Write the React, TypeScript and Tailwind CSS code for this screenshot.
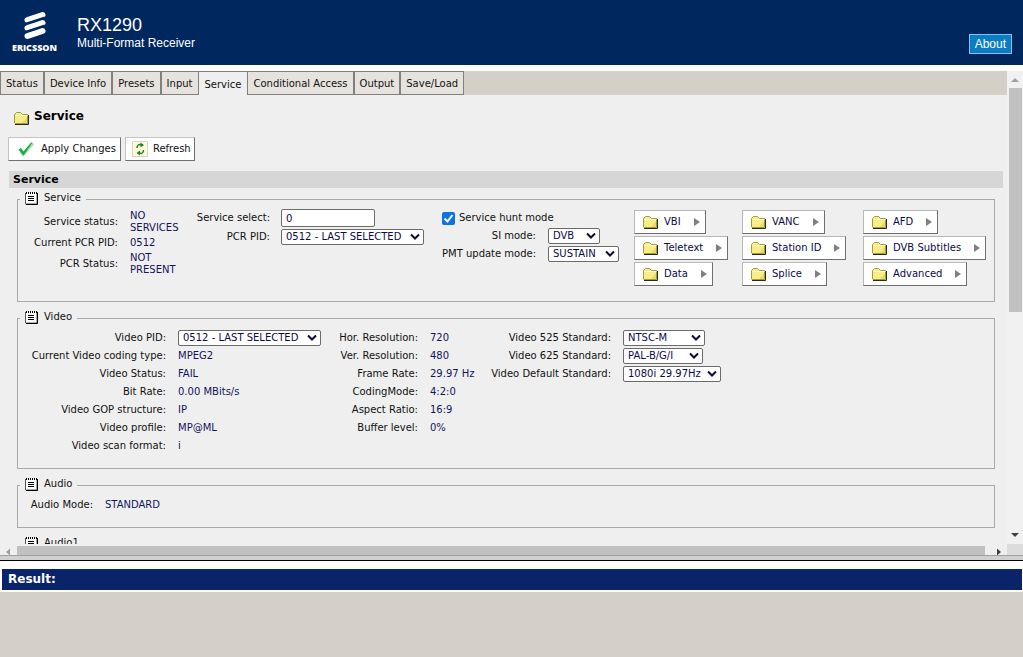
import React from "react";

function FolderIcon() {
  return (
    <svg width="15" height="14" viewBox="0 0 15 14" className="shrink-0" aria-hidden="true">
      <path d="M.5 12V3.500L2.500 1.500h4L8.500 3.500H13.500V12.500H1z" fill="#f8ee88" stroke="#a39a45" />
      <path d="M1.500 4.500h12" stroke="#fffcc8" />
      <path d="M8 12l5-6v6z" fill="#ecd96c" />
      <path d="M1 13.500h13.500V4" fill="none" stroke="#2a2a18" />
    </svg>
  );
}

function NoteIcon() {
  return (
    <svg width="13" height="13" viewBox="0 0 13 13" className="shrink-0" aria-hidden="true">
      <path d="M.5 1v11h11.500V1" fill="#fff" stroke="#555" />
      <path d="M12.500 1v11.500H1" fill="none" stroke="#000" />
      <path d="M1 1h11" stroke="#000" strokeWidth="2" strokeDasharray="1 1" />
      <path d="M3 4.500h6M3 6.500h6M3 8.500h6" stroke="#000" />
    </svg>
  );
}

function Chevron() {
  return (
    <svg
      width="10"
      height="8"
      viewBox="0 0 10 8"
      className="pointer-events-none absolute right-1 top-1"
      aria-hidden="true"
    >
      <path d="M1 1.500l4 4 4-4" fill="none" stroke="#0b0b3c" strokeWidth="2" />
    </svg>
  );
}

function Select({ id, value, width }: { id: string; value: string; width: string }) {
  return (
    <span className={`relative block h-4 ${width}`}>
      <select
        id={id}
        className="block h-4 w-full appearance-none rounded-[2px] border border-[#6b6b6b] bg-white pl-1 text-[10px] leading-[14px] text-[#0b0b4a]"
      >
        <option>{value}</option>
      </select>
      <Chevron />
    </span>
  );
}

function Panel({ title, className, children }: { title: string; className: string; children?: React.ReactNode }) {
  return (
    <fieldset className={`border border-[#a9a9a9] ${className}`}>
      <legend className="ml-[2px] h-[14px] px-[5px]">
        <span className="flex h-[14px] items-center gap-1.5 pb-[2px]">
          <NoteIcon />
          {title}
        </span>
      </legend>
      {children}
    </fieldset>
  );
}

function LinkButton({ label }: { label: string }) {
  return (
    <button
      type="button"
      className="flex h-6 items-center justify-self-start whitespace-nowrap border border-[#b8b8b8] border-r-[#707070] border-b-[#707070] bg-white pr-[5px] pl-2 text-[#0b0b4a]"
    >
      <FolderIcon />
      <span className="ml-1.5">{label}</span>
      <svg width="6" height="8" viewBox="0 0 6 8" className="ml-[13px]" aria-hidden="true">
        <path d="M0 0l6 4-6 4z" fill="#808080" />
      </svg>
    </button>
  );
}

type Row = { label: string; value?: string; select?: { id: string; width: string } };

function Rows({ rows, columns }: { rows: Row[]; columns: string }) {
  return (
    <div className={`grid auto-rows-[18px] content-start items-center gap-x-3 ${columns}`}>
      {rows.map((r) => (
        <React.Fragment key={r.label}>
          {r.select ? (
            <label htmlFor={r.select.id} className="whitespace-nowrap text-right">
              {r.label}
            </label>
          ) : (
            <span className="whitespace-nowrap text-right">{r.label}</span>
          )}
          {r.select ? (
            <Select id={r.select.id} value={r.value ?? ""} width={r.select.width} />
          ) : (
            <span className="whitespace-nowrap text-[#14145c]">{r.value}</span>
          )}
        </React.Fragment>
      ))}
    </div>
  );
}

const tabs = ["Status", "Device Info", "Presets", "Input", "Service", "Conditional Access", "Output", "Save/Load"];
const links = ["VBI", "VANC", "AFD", "Teletext", "Station ID", "DVB Subtitles", "Data", "Splice", "Advanced"];

export default function App() {
  return (
    <div className="flex h-screen flex-col overflow-hidden bg-white font-['Verdana','DejaVu_Sans',sans-serif] text-[10px] leading-3 text-[#111]">
      <header className="flex h-[65px] shrink-0 bg-[#00285f] font-['Liberation_Sans',sans-serif] text-white">
        <div className="flex w-[69px] flex-col items-center pt-[11px]">
          <svg width="22" height="29" viewBox="0 0 22 29" aria-hidden="true">
            <path
              d="M3.500 9L18.500 4M3.500 17L18.500 12M3.500 25L18.500 20"
              stroke="#fff"
              strokeWidth="6"
              strokeLinecap="round"
            />
            <path d="M1 13L21 6.500M1 21L21 14.500" stroke="#00285f" strokeWidth="2" />
          </svg>
          <span className="mt-[2px] font-['Open_Sans',sans-serif] text-[9px] font-extrabold leading-3">ERICSSON</span>
        </div>
        <div className="ml-2 flex-1 pt-[15px]">
          <h1 className="text-[18px] leading-5">RX1290</h1>
          <p className="text-[12px] leading-4">Multi-Format Receiver</p>
        </div>
        <a
          href="#about"
          className="mt-[34px] mr-[11px] h-5 border border-[#7fc4ee] bg-[#0a7dc4] px-[5px] text-[12px] leading-[18px]"
        >
          About
        </a>
      </header>

      <main className="mt-[6px] flex min-h-0 flex-1">
        <div className="flex min-w-0 flex-1 flex-col bg-[#efefef]">
          <div className="min-h-0 flex-1 overflow-hidden">
            <nav className="flex h-6 bg-[#d4d0c8]">
              {tabs.map((t) =>
                t === "Service" ? (
                  <a key={t} href="#service" className="border-t border-[#808080] bg-[#efefef] px-1.5 pt-[7px]">
                    {t}
                  </a>
                ) : (
                  <a
                    key={t}
                    href="#tab"
                    className="whitespace-nowrap border border-[#808080] bg-[#e6e3de] px-[5px] pt-[6px]"
                  >
                    {t}
                  </a>
                ),
              )}
            </nav>
            <h2 className="mt-3 ml-[14px] flex h-[18px] items-center gap-[5px] text-[12px] font-bold leading-4 text-black">
              <span className="pt-1">
                <FolderIcon />
              </span>
              Service
            </h2>
            <div className="mt-3 ml-2 flex gap-1">
              <button
                type="button"
                className="flex h-6 items-center border border-[#c4c4c4] border-r-[#707070] border-b-[#707070] bg-white pr-1 pl-[9px]"
              >
                <svg width="16" height="16" viewBox="0 0 16 16" aria-hidden="true">
                  <path d="M2 10.500l3 4L15.500 2.500" fill="none" stroke="#b9d6bf" strokeWidth="2" />
                  <path d="M.5 8.500L3 7l2.500 3.500L13 1.500l1.500 0L6 14H5z" fill="#12b03c" />
                </svg>
                <span className="ml-[7px]">Apply Changes</span>
              </button>
              <button
                type="button"
                className="flex h-6 items-center border border-[#c4c4c4] border-r-[#707070] border-b-[#707070] bg-white pr-[3px] pl-1.5"
              >
                <svg width="17" height="17" viewBox="0 0 17 17" aria-hidden="true">
                  <path d="M.5.500h15v15H.5z" fill="#fbfbdc" stroke="#d6d6c8" />
                  <path d="M5 7c0-3 2-4 4-3M11.500 9c0 3-2 4-4 3" fill="none" stroke="#2b7a2b" strokeWidth="1.500" />
                  <path d="M8.500 1.500v5l3.500-2.500zM8 9.500v5L4.500 12z" fill="#2b7a2b" />
                </svg>
                <span className="ml-1">Refresh</span>
              </button>
            </div>
            <h3 className="mt-[10px] mr-1 ml-[9px] bg-[#d6d6d6] pl-1 text-[11px] font-bold leading-[17px] text-black">
              Service
            </h3>

            <div className="mt-1 mr-3 ml-[17px] flex flex-col gap-[9px]">
              <Panel title="Service" className="h-[110px]">
                <div className="flex">
                  <div className="mt-1 grid shrink-0 grid-cols-[100px_54px] content-start items-center gap-x-3 grid-rows-[24px_18px_24px]">
                    <span className="text-right">Service status:</span>
                    <span className="text-[#14145c]">NO SERVICES</span>
                    <span className="text-right">Current PCR PID:</span>
                    <span className="text-[#14145c]">0512</span>
                    <span className="text-right">PCR Status:</span>
                    <span className="text-[#14145c]">NOT PRESENT</span>
                  </div>
                  <div className="mt-[3px] ml-2 grid shrink-0 auto-rows-[18px] grid-cols-[78px_143px] content-start items-center gap-x-[11px] gap-y-px">
                    <label htmlFor="service-select" className="whitespace-nowrap text-right">
                      Service select:
                    </label>
                    <input
                      id="service-select"
                      defaultValue="0"
                      className="h-[18px] w-[94px] rounded-[2px] border border-[#6b6b6b] bg-white px-1 text-[#0b0b4a]"
                    />
                    <label htmlFor="pcr-pid" className="text-right">
                      PCR PID:
                    </label>
                    <Select id="pcr-pid" value="0512 - LAST SELECTED" width="w-[143px]" />
                  </div>
                  <div className="mt-[3px] ml-[18px] shrink-0">
                    <label className="flex h-[18px] items-center gap-1 whitespace-nowrap">
                      <span className="relative block size-[13px]">
                        <input
                          type="checkbox"
                          defaultChecked
                          className="block size-[13px] appearance-none rounded-[2px] bg-[#0b74e0]"
                        />
                        <svg
                          viewBox="0 0 13 13"
                          className="pointer-events-none absolute inset-0 size-[13px]"
                          aria-hidden="true"
                        >
                          <path d="M2.500 6.500l3 3 5-6.500" fill="none" stroke="#fff" strokeWidth="2" />
                        </svg>
                      </span>
                      Service hunt mode
                    </label>
                    <Rows
                      columns="grid-cols-[94px_71px]"
                      rows={[
                        { label: "SI mode:", value: "DVB", select: { id: "si-mode", width: "w-[52px]" } },
                        { label: "PMT update mode:", value: "SUSTAIN", select: { id: "pmt-mode", width: "w-[71px]" } },
                      ]}
                    />
                  </div>
                  <div className="mt-1 ml-[15px] grid grid-cols-[96px_109px_auto] content-start gap-x-3 gap-y-[2px]">
                    {links.map((l) => (
                      <LinkButton key={l} label={l} />
                    ))}
                  </div>
                </div>
              </Panel>

              <Panel title="Video" className="h-[158px]">
                <div className="flex pt-1">
                  <Rows
                    columns="grid-cols-[148px_143px]"
                    rows={[
                      {
                        label: "Video PID:",
                        value: "0512 - LAST SELECTED",
                        select: { id: "video-pid", width: "w-[143px]" },
                      },
                      { label: "Current Video coding type:", value: "MPEG2" },
                      { label: "Video Status:", value: "FAIL" },
                      { label: "Bit Rate:", value: "0.00 MBits/s" },
                      { label: "Video GOP structure:", value: "IP" },
                      { label: "Video profile:", value: "MP@ML" },
                      { label: "Video scan format:", value: "i" },
                    ]}
                  />
                  <Rows
                    columns="grid-cols-[97px_48px]"
                    rows={[
                      { label: "Hor. Resolution:", value: "720" },
                      { label: "Ver. Resolution:", value: "480" },
                      { label: "Frame Rate:", value: "29.97 Hz" },
                      { label: "CodingMode:", value: "4:2:0" },
                      { label: "Aspect Ratio:", value: "16:9" },
                      { label: "Buffer level:", value: "0%" },
                    ]}
                  />
                  <Rows
                    columns="grid-cols-[133px_98px]"
                    rows={[
                      { label: "Video 525 Standard:", value: "NTSC-M", select: { id: "std-525", width: "w-[82px]" } },
                      { label: "Video 625 Standard:", value: "PAL-B/G/I", select: { id: "std-625", width: "w-[80px]" } },
                      {
                        label: "Video Default Standard:",
                        value: "1080i 29.97Hz",
                        select: { id: "std-default", width: "w-[98px]" },
                      },
                    ]}
                  />
                </div>
              </Panel>

              <Panel title="Audio" className="h-[50px]">
                <div className="pt-1">
                  <Rows columns="grid-cols-[75px_auto]" rows={[{ label: "Audio Mode:", value: "STANDARD" }]} />
                </div>
              </Panel>

              <Panel title="Audio1" className="h-[50px]" />
            </div>
          </div>
          <div className="flex h-[11px] shrink-0 items-stretch bg-[#efefef]">
            <svg width="17" height="11" viewBox="0 0 17 11" aria-hidden="true">
              <path d="M10 4.500v7L6 8z" fill="#a0a0a0" />
            </svg>
            <div className="mt-[2px] flex-1 bg-[#c0c0c0]" />
            <svg width="22" height="11" viewBox="0 0 22 11" aria-hidden="true">
              <path d="M12 4.500v7L16 8z" fill="#404040" />
            </svg>
          </div>
        </div>
        <div className="flex w-4 shrink-0 flex-col items-center bg-[#f1f1f1]">
          <svg width="16" height="17" viewBox="0 0 16 17" aria-hidden="true">
            <path d="M4 11h8L8 7z" fill="#a0a0a0" />
          </svg>
          <div className="w-full flex-1 pr-px pl-[2px]">
            <div className="h-[51%] bg-[#c1c1c1]" />
          </div>
          <svg width="16" height="17" viewBox="0 0 16 17" aria-hidden="true">
            <path d="M4 6h8l-4 4z" fill="#404040" />
          </svg>
          <div className="h-[11px] w-full bg-[#dcdcdc]" />
        </div>
      </main>

      <footer className="shrink-0">
        <div className="h-[6px] border-t border-b border-t-[#a0a0a0] border-b-black bg-[#d0d0d0]" />
        <h2 className="mx-[2px] mt-2 mr-px h-[21px] bg-[#0a246a] pl-1.5 text-[12px] font-bold leading-[21px] text-white">
          Result:
        </h2>
        <div className="mt-[2px] h-[65px] bg-[#d4d0c8]" />
      </footer>
    </div>
  );
}
